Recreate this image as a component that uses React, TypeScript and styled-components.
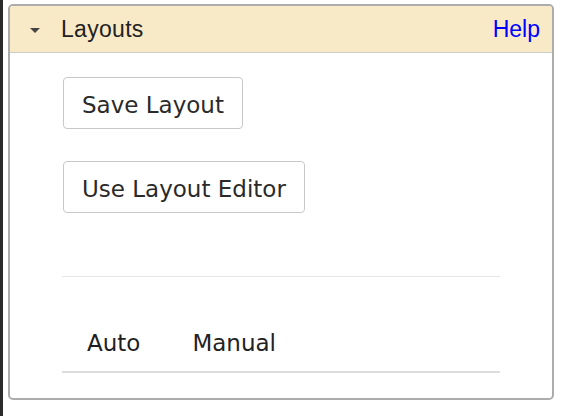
import React, { useState } from "react";
import styled, { createGlobalStyle } from "styled-components";

const GlobalStyle = createGlobalStyle`
  html, body {
    margin: 0;
    padding: 0;
    background: #ffffff;
  }
  body {
    font-family: "DejaVu Sans", Verdana, sans-serif;
  }
`;

type Mode = "Auto" | "Manual";

export default function App() {
  const [mode, setMode] = useState<Mode>("Auto");

  return (
    <>
      <GlobalStyle />
      <S.Page>
        <S.Panel>
          <S.Header>
            <S.Caret />
            <S.Title>Layouts</S.Title>
            <S.HelpLink href="#">Help</S.HelpLink>
          </S.Header>
          <S.Body>
            <S.Actions>
              <S.Button>Save Layout</S.Button>
              <S.Button>Use Layout Editor</S.Button>
            </S.Actions>
            <S.Divider />
            <S.Tabs>
              {(["Auto", "Manual"] as Mode[]).map((item) => (
                <S.Tab
                  key={item}
                  $active={item === mode}
                  onClick={() => setMode(item)}
                >
                  {item}
                </S.Tab>
              ))}
            </S.Tabs>
          </S.Body>
        </S.Panel>
      </S.Page>
    </>
  );
}

const S = {
  Page: styled.div`
    display: flex;
    align-items: flex-start;
    min-height: 416px;
    box-sizing: border-box;
    border-left: 3px solid #2b2b2b;
    padding: 4px 0 0 5px;
  `,
  Panel: styled.section`
    display: flex;
    flex-direction: column;
    width: 546px;
    height: 396px;
    box-sizing: border-box;
    border: 2px solid #acacac;
    border-radius: 5px;
    overflow: hidden;
    background: #ffffff;
  `,
  Header: styled.div`
    display: flex;
    align-items: center;
    height: 47px;
    box-sizing: border-box;
    padding: 0 12px 0 20px;
    background: #f9eac7;
    border-bottom: 1px solid #cbcbcb;
  `,
  Caret: styled.span`
    width: 0;
    height: 0;
    margin: 2px 21px 0 0;
    border-left: 5px solid transparent;
    border-right: 5px solid transparent;
    border-top: 5px solid #444444;
  `,
  Title: styled.span`
    flex: 1;
    font-family: "Liberation Sans", Arial, sans-serif;
    font-size: 23px;
    letter-spacing: 0.3px;
    color: #222222;
  `,
  HelpLink: styled.a`
    font-family: "Liberation Sans", Arial, sans-serif;
    font-size: 23px;
    color: #0000ff;
    text-decoration: none;
  `,
  Body: styled.div`
    display: flex;
    flex-direction: column;
    padding: 0 52px;
  `,
  Actions: styled.div`
    display: flex;
    flex-direction: column;
    align-items: flex-start;
    gap: 32px;
    padding: 24px 0 0 1px;
  `,
  Button: styled.button`
    display: inline-flex;
    align-items: center;
    height: 52px;
    box-sizing: border-box;
    padding: 3px 18px 0;
    background: #ffffff;
    border: 1px solid #c8c8c8;
    border-radius: 4px;
    font-family: "DejaVu Sans", Verdana, sans-serif;
    font-size: 23px;
    color: #2a2a2a;
    cursor: pointer;
  `,
  Divider: styled.hr`
    margin: 63px 0 0;
    border: 0;
    border-top: 1px solid #e6e6e6;
  `,
  Tabs: styled.nav`
    display: flex;
    padding: 53px 0 0;
    border-bottom: 2px solid #dddddd;
  `,
  Tab: styled.button<{ $active: boolean }>`
    padding: 0 27px 15px 25px;
    background: none;
    border: 0;
    font-family: "DejaVu Sans", Verdana, sans-serif;
    font-size: 23px;
    line-height: normal;
    color: ${({ $active }) => ($active ? "#1f1f1f" : "#222222")};
    cursor: pointer;
  `,
};
